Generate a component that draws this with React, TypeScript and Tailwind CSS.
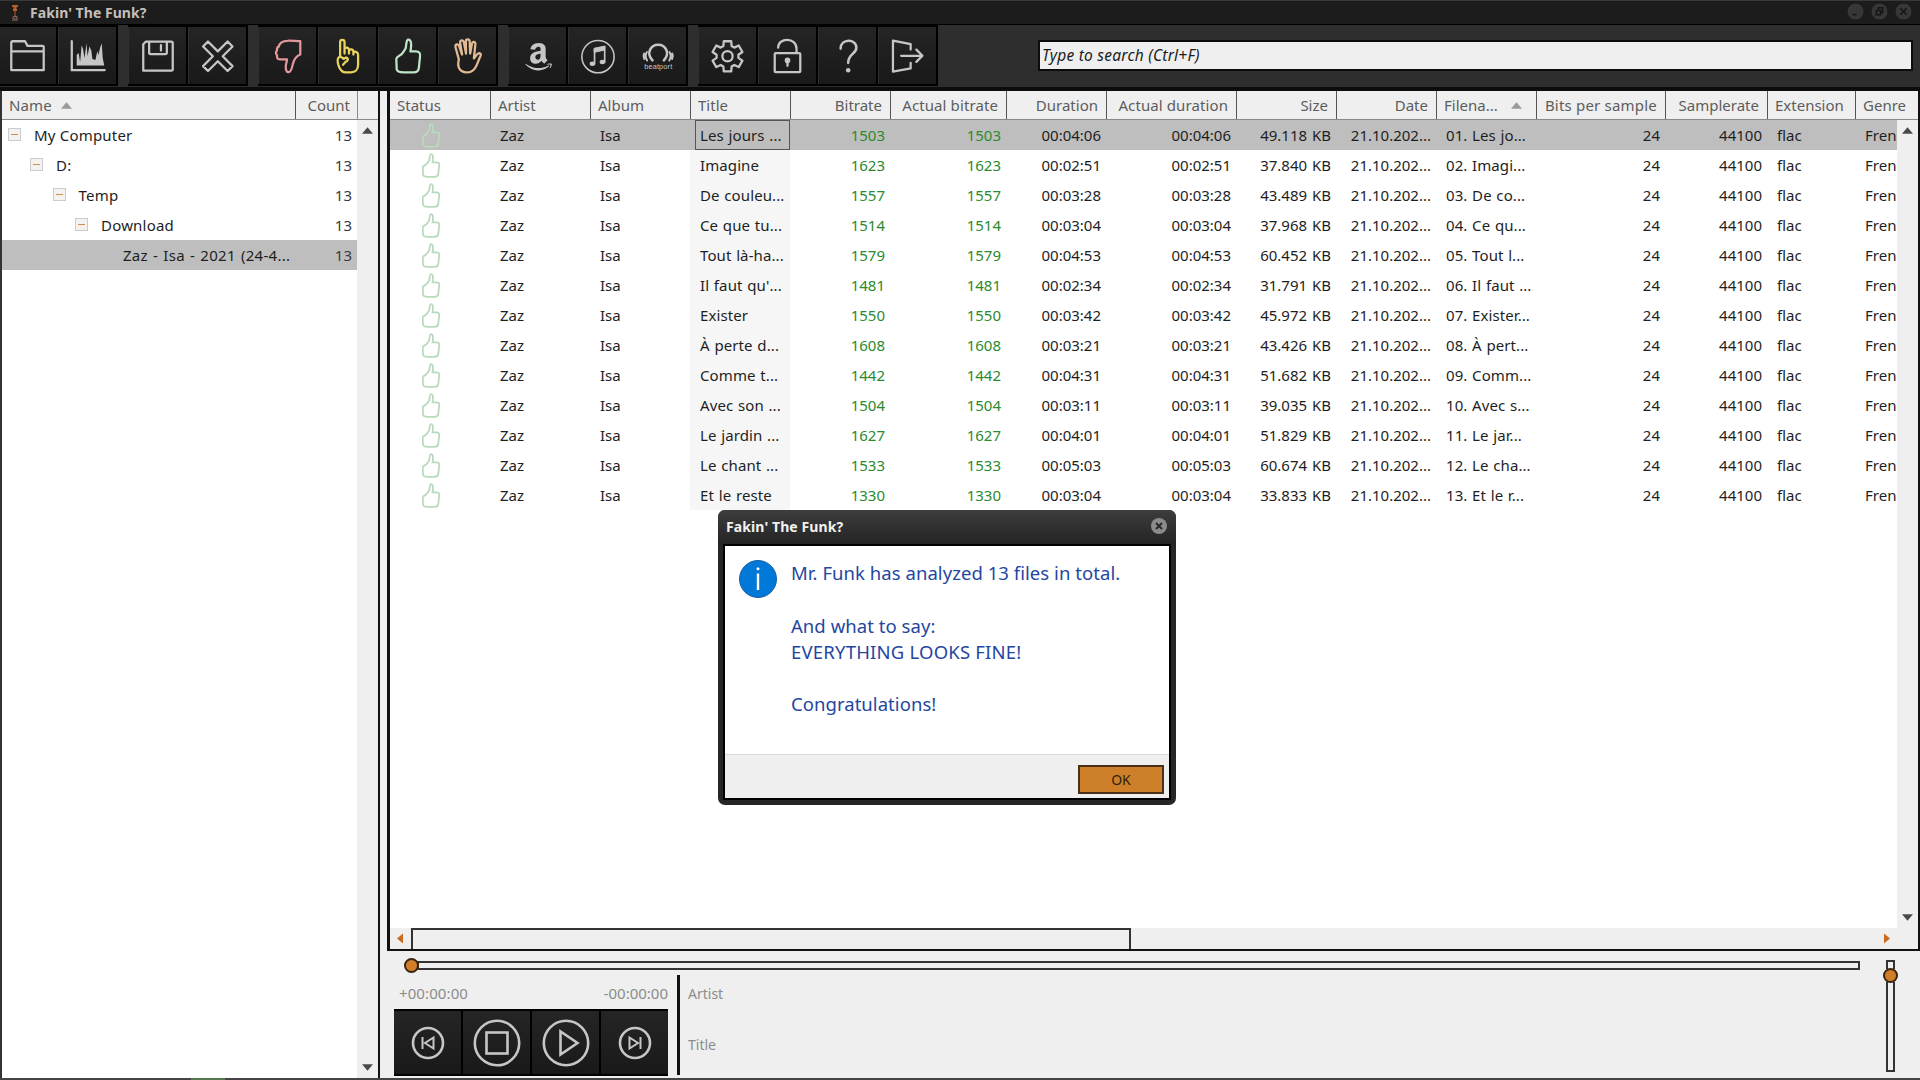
import type { ReactNode } from "react";
import clsx from "clsx";
import { FaAmazon } from "react-icons/fa";

type Column = { label: string; width: string; right?: boolean; sorted?: boolean; spacing?: string };

const columns: Column[] = [
  { label: "Status", width: "w-[101px]" },
  { label: "Artist", width: "w-[100px]" },
  { label: "Album", width: "w-[100px]" },
  { label: "Title", width: "w-[100px]" },
  { label: "Bitrate", width: "w-[100px]", right: true },
  { label: "Actual bitrate", width: "w-[116px]", right: true, spacing: "tracking-[0.1px]" },
  { label: "Duration", width: "w-[100px]", right: true },
  { label: "Actual duration", width: "w-[130px]", right: true, spacing: "tracking-[0.1px]" },
  { label: "Size", width: "w-[100px]", right: true },
  { label: "Date", width: "w-[100px]", right: true },
  { label: "Filena...", width: "w-[100px]", sorted: true },
  { label: "Bits per sample", width: "w-[129px]", right: true, spacing: "tracking-[0.2px]" },
  { label: "Samplerate", width: "w-[102px]", right: true },
  { label: "Extension", width: "w-[88px]" },
  { label: "Genre", width: "w-[62px]" },
];

const tracks = [
  { title: "Les jours ...", bitrate: 1503, duration: "00:04:06", size: "49.118 KB", file: "01. Les jo..." },
  { title: "Imagine", bitrate: 1623, duration: "00:02:51", size: "37.840 KB", file: "02. Imagi..." },
  { title: "De couleu...", bitrate: 1557, duration: "00:03:28", size: "43.489 KB", file: "03. De co..." },
  { title: "Ce que tu...", bitrate: 1514, duration: "00:03:04", size: "37.968 KB", file: "04. Ce qu..." },
  { title: "Tout là-ha...", bitrate: 1579, duration: "00:04:53", size: "60.452 KB", file: "05. Tout l..." },
  { title: "Il faut qu'...", bitrate: 1481, duration: "00:02:34", size: "31.791 KB", file: "06. Il faut ..." },
  { title: "Exister", bitrate: 1550, duration: "00:03:42", size: "45.972 KB", file: "07. Exister..." },
  { title: "À perte d...", bitrate: 1608, duration: "00:03:21", size: "43.426 KB", file: "08. À pert..." },
  { title: "Comme t...", bitrate: 1442, duration: "00:04:31", size: "51.682 KB", file: "09. Comm..." },
  { title: "Avec son ...", bitrate: 1504, duration: "00:03:11", size: "39.035 KB", file: "10. Avec s..." },
  { title: "Le jardin ...", bitrate: 1627, duration: "00:04:01", size: "51.829 KB", file: "11. Le jar..." },
  { title: "Le chant ...", bitrate: 1533, duration: "00:05:03", size: "60.674 KB", file: "12. Le cha..." },
  { title: "Et le reste", bitrate: 1330, duration: "00:03:04", size: "33.833 KB", file: "13. Et le r..." },
];

const folders = [
  { name: "My Computer", indent: "pl-[6px]" },
  { name: "D:", indent: "pl-[28px]" },
  { name: "Temp", indent: "pl-[50.5px]" },
  { name: "Download", indent: "pl-[73px]" },
  { name: "Zaz - Isa - 2021 (24-4...", indent: "pl-[121px]", leaf: true },
];

const THUMB_UP =
  "M27 22.5C28 19 27.5 14 29.5 13.3C32.5 12.8 33.5 17 32 25.3H37.5C41 25.3 42.5 27.5 41.7 31L40.5 42.5C40 45.5 38 46.7 35.3 46.7H25C22 46.7 18.5 46 18 43.5L17.6 33C17.8 30 22.5 30 24 27Z";

function gearPath(cx: number, cy: number) {
  const pts: string[] = [];
  for (let i = 0; i < 6; i++) {
    for (const [offset, r] of [[-22, 11.2], [-14, 15.8], [14, 15.8], [22, 11.2]]) {
      const a = ((i * 60 + offset - 90) * Math.PI) / 180;
      pts.push(`${(cx + r * Math.cos(a)).toFixed(1)} ${(cy + r * Math.sin(a)).toFixed(1)}`);
    }
  }
  return `M${pts.join("L")}Z`;
}

function ToolButton({ color = "text-[#c6c6c6]", first, children }: { color?: string; first?: boolean; children: ReactNode }) {
  return (
    <button
      className={clsx(
        "flex h-[61px] shrink-0 justify-end overflow-hidden border-y-2 border-r-2 border-black bg-linear-to-b from-[#252525] to-[#191919]",
        first ? "w-[58px]" : "w-[60px]",
        color,
      )}
    >
      <svg
        viewBox="0 1 58 57"
        className="h-[57px] w-[58px] shrink-0 border-l border-[#303030]"
        fill="none"
        stroke="currentColor"
        strokeWidth="2.3"
        strokeLinejoin="round"
        strokeLinecap="round"
      >
        {children}
      </svg>
    </button>
  );
}

function Toolbar() {
  return (
    <div className="flex h-[62px] items-start gap-[10px] bg-[#2e2e2e]">
      <div className="flex">
        <ToolButton first>
          <path d="M12.5 44.5V16.5C12.5 15.5 13 15 14 15H26.5L29 19.7H44C45 19.7 45.5 20.2 45.5 21V44.5ZM12.5 25.3H45.5" />
        </ToolButton>
        <ToolButton>
          <path d="M13 15V44.3H46.5" strokeLinejoin="miter" />
          <path
            d="M18 39.7V29L20 27L21.5 36L23 19L24.5 23L26 32L28 17L29 30L31 20L33 25L34 33L37 34L39 25L40 29L42 21L43.5 17L44.5 32L46 39.7Z"
            fill="currentColor"
            stroke="none"
          />
        </ToolButton>
      </div>
      <div className="flex">
        <ToolButton>
          <path d="M14.5 45V18L17 15.5H43C44 15.5 44.5 16 44.5 17V44C44.5 45 44 45 43 45ZM20.5 16V26.5C20.5 27.5 21 28 22 28H37C38 28 38.5 27.5 38.5 26.5V16M32.5 19V24.5" />
        </ToolButton>
        <ToolButton>
          <path
            transform="translate(29.3 30.3)"
            d="M0-5L10-15L15-10L5 0L15 10L10 15L0 5L-10 15L-15 10L-5 0L-15-10L-10-15Z"
          />
        </ToolButton>
      </div>
      <div className="flex">
        <ToolButton color="text-[#e3989b]">
          <path d="M20 20.5C21 16.5 24.5 14.5 29 14.5C33 14.3 38 15 42 15V28.5C38 30 35.5 34 34.5 38C33.7 42 32.5 46.5 30 46.5C27.5 46.5 27 43 27.3 40C27.5 37.5 28.5 35 28.5 33.5H21.5C18.5 33.5 18 31.5 18.5 29.5C16.8 28 17 25.5 18.3 24.5C18 22.5 18.8 21 20 20.5Z" />
        </ToolButton>
        <ToolButton color="text-[#e8d45c]">
          <path d="M21.5 30.5V16C21.5 12.8 26 12.8 26 16V27.5M26 23C26.5 20.5 30.5 21 30.5 24V27.5M30.5 24.5C31.5 22.5 35 23 35 25.8V28.5M35 26.5C37 24.8 39.8 26 39.8 29V39C39.8 43.5 37 46.7 32.5 46.7H27.5C23 46.7 21 43 20 40C19 37 18 33.5 20 31.5C21 30.5 24 31 25 33L27.5 31.5C30.5 32.5 29.5 35 27 36L24.5 39" />
        </ToolButton>
        <ToolButton color="text-[#bfe3c6]">
          <path d={THUMB_UP} />
        </ToolButton>
        <ToolButton color="text-[#e3bb92]">
          <path d="M20.2 33.5L16.8 21C16.2 18 19.5 17 20.5 20L23.5 28.5L21.5 16.5C21.2 13.6 24.7 13 25.3 16L27.5 27.5L27.3 15C27.3 12.3 31 12.3 31.2 15L31.7 27.5L33.5 17.5C34 14.8 37.3 15.3 37 18.2L35.5 32.5C37.5 31.5 38 27 41 27C43.3 27.3 42.8 29.5 41.5 31.5C39 37 37.5 46.7 28.5 46.7C20 46.7 18.5 40 20.2 33.5Z" />
        </ToolButton>
      </div>
      <div className="flex">
        <ToolButton>
          <g transform="translate(14 14.7)" stroke="none">
            <FaAmazon size={32} />
          </g>
        </ToolButton>
        <ToolButton>
          <circle cx="29.5" cy="30.7" r="16.4" strokeWidth="1.6" />
          <path d="M26 38V22.5L36.3 20.3V36" strokeWidth="1.7" />
          <path d="M26 22.5L36.3 20.3V24L26 26.2Z" fill="currentColor" strokeWidth="1" />
          <ellipse cx="23.8" cy="37.8" rx="2.8" ry="2.3" fill="currentColor" stroke="none" />
          <ellipse cx="34" cy="36" rx="2.8" ry="2.3" fill="currentColor" stroke="none" />
        </ToolButton>
        <ToolButton>
          <g transform="translate(-0.6 0)">
            <path d="M24.5 34.5C17.5 27 23 18.5 30.3 18.5C37.6 18.5 43 27 36.1 34.5" strokeWidth="2.6" />
            <path
              d="M19 34.5C17.2 31.5 17.2 28.5 18.8 26M16.2 33C15.2 31 15.2 29 16 27.5M41.6 34.5C43.4 31.5 43.4 28.5 41.8 26M44.4 33C45.4 31 45.4 29 44.6 27.5"
              strokeWidth="2"
            />
            <text
              x="30.3"
              y="43.3"
              textAnchor="middle"
              textLength="28.5"
              className="fill-[#c6c6c6] font-['Liberation_Sans'] text-[7.5px]"
              stroke="none"
            >
              beatport
            </text>
          </g>
        </ToolButton>
      </div>
      <div className="flex">
        <ToolButton>
          <path d={gearPath(29, 30.3)} />
          <circle cx="29" cy="30.3" r="5.2" />
        </ToolButton>
        <ToolButton>
          <rect x="16" y="27" width="26" height="19.5" rx="1" />
          <path d="M19.5 21.5C19.5 10.8 38.2 10.8 38.2 22.5V27" />
          <circle cx="29" cy="34.5" r="1.7" fill="currentColor" />
          <path d="M29 35V40" />
        </ToolButton>
        <ToolButton>
          <path d="M22 22.5C22 12 38 12 38 21.5C38 28 29.7 27.5 29.7 37" strokeWidth="2.6" />
          <circle cx="29.7" cy="44.6" r="2.3" fill="currentColor" stroke="none" />
        </ToolButton>
        <ToolButton>
          <path d="M32.2 23.5V18L14.2 14.3V46L32.2 42.7V37M22.5 29.8H44M38 23.5L44.2 29.8L38 36" />
        </ToolButton>
      </div>
      <div className="mt-[15px] mr-[7px] ml-[90px] h-[31px] grow border-2 border-[#0c0c0c] bg-[#efefef] pl-[2px] text-[15.5px] leading-[27px] tracking-[0.25px] text-[#1c1c1c] italic">
        Type to search (Ctrl+F)
      </div>
    </div>
  );
}

function TitleBar() {
  return (
    <header className="flex h-[25px] items-center border-t border-b border-t-[#3a3a3a] border-b-black bg-[#1c1c1c]">
      <svg viewBox="0 0 8 18" className="ml-[11px] h-[18px] w-2">
        <path d="M1 1H7V3H5.5V5H6V7H2V5H2.5V3H1Z" fill="#b5622a" />
        <path d="M3 7H5V12H3Z" fill="#6b3a22" />
        <path d="M2 17V13.5C2 12 6 12 6 13.5V17M4 14V17" fill="none" stroke="#8a6a5e" strokeWidth="1.2" />
      </svg>
      <span className="ml-[11px] text-[14px] font-bold tracking-[0.05px] text-[#c4bfb8]">Fakin' The Funk?</span>
      <div className="mr-[8px] ml-auto flex gap-[7px]">
        {["M5 11H9", "M5 7H9V11H5ZM7 7V4.5H11V9H9", "M5 5L11 11M11 5L5 11"].map((d) => (
          <svg key={d} viewBox="0 0 16 16" className="-mt-[2px] size-[17px]">
            <circle cx="8" cy="8" r="7.5" fill="#373737" />
            <path d={d} fill="none" stroke="#141414" strokeWidth="1.4" />
          </svg>
        ))}
      </div>
    </header>
  );
}

function Arrow({ dir, className }: { dir: "up" | "down" | "left" | "right"; className: string }) {
  const d = { up: "M0 6L5 0L10 6Z", down: "M0 0H10L5 6Z", left: "M6 0V10L0 5Z", right: "M0 0L6 5L0 10Z" }[dir];
  const vertical = dir === "up" || dir === "down";
  return (
    <svg viewBox={vertical ? "0 0 10 6" : "0 0 6 10"} className={clsx("shrink-0", vertical ? "h-[7px] w-[11px]" : "h-[11px] w-[6px]", className)}>
      <path d={d} fill="currentColor" />
    </svg>
  );
}

function VerticalScroll() {
  return (
    <div className="flex w-[21px] shrink-0 flex-col items-center justify-between bg-[#efefef] pt-[7px] pb-[7px]">
      <Arrow dir="up" className="text-[#4a4a4a]" />
      <Arrow dir="down" className="text-[#4a4a4a]" />
    </div>
  );
}

function FolderTree() {
  return (
    <aside className="flex w-[381px] flex-col border-r-2 border-l-2 border-r-[#111] border-l-[#333]">
      <div className="flex h-[29px] border-b border-[#8a8a8a] bg-[#efefef] text-[#5d5d5d]">
        <div className="flex w-[294px] items-center border-r border-[#555] pl-[7px] tracking-[0.1px]">
          Name <Arrow dir="up" className="ml-[9px] text-[#9a9a9a]" />
        </div>
        <div className="flex w-[62px] items-center justify-end border-r border-[#8a8a8a] pr-[7px]">Count</div>
      </div>
      <div className="flex grow bg-white">
        <div className="grow">
          {folders.map(({ name, indent, leaf }) => (
            <div key={name} className={clsx("flex h-[30px] items-center pr-[5px] text-[#1e1e1e]", indent, leaf && "bg-[#bebebe]")}>
              {!leaf && (
                <span className="mr-[13px] -mt-[2px] grid size-[13px] place-items-center border border-[#c9cdd3] bg-[#f4f1ee]">
                  <span className="h-px w-[7px] bg-[#c98f55]" />
                </span>
              )}
              <span className={leaf ? "tracking-[0.28px] [word-spacing:1px]" : "tracking-[0.2px]"}>{name}</span>
              <span className="ml-auto text-[#3a3a42]">13</span>
            </div>
          ))}
        </div>
        <VerticalScroll />
      </div>
    </aside>
  );
}

function TrackTable() {
  return (
    <section className="flex h-[860px] shrink-0 flex-col border-r-2 border-b-2 border-l-[3px] border-[#111] bg-white">
      <div className="flex h-[29px] shrink-0 border-b border-[#8a8a8a] bg-[#efefef] text-[#5d5d5d]">
        {columns.map(({ label, width, right, sorted, spacing }, i) => (
          <div
            key={label}
            className={clsx(
              "flex shrink-0 items-center pl-[7px] whitespace-nowrap",
              width,
              spacing,
              right && "justify-end pr-[8px]",
              i < columns.length - 1 && "border-r border-[#555]",
            )}
          >
            {label}
            {sorted && <Arrow dir="up" className="mr-[14px] ml-auto text-[#9a9a9a]" />}
          </div>
        ))}
      </div>
      <div className="flex grow">
        <div className="w-[1507px] overflow-hidden">
          {tracks.map((t, i) => (
            <div
              key={t.file}
              className={clsx("flex h-[30px] items-center whitespace-nowrap text-[#1e1e1e]", i === 0 && "bg-[#bebebe]")}
            >
              <div className="w-[101px] shrink-0 pl-[32px]">
                <svg viewBox="16.5 12 26.5 36" className="h-[25px] w-[18px] text-[#b9dabd]">
                  <path d={THUMB_UP} fill="none" stroke="currentColor" strokeWidth="2.6" />
                </svg>
              </div>
              <div className="w-[100px] shrink-0 pl-[9px]">Zaz</div>
              <div className="w-[99px] shrink-0 pl-[9px]">Isa</div>
              <div className={clsx("h-full w-[100px] shrink-0", i > 0 && "bg-[#f6f6f6]")}>
                <div
                  className={clsx(
                    "ml-[5px] h-full border pl-[4px] leading-[29px] tracking-[0.1px] [word-spacing:0.7px]",
                    i === 0 ? "border-[#555]" : "border-transparent",
                  )}
                >
                  {t.title}
                </div>
              </div>
              <div className="w-[101px] shrink-0 pr-[6px] text-right text-[#2b8a2f]">{t.bitrate}</div>
              <div className="w-[116px] shrink-0 pr-[6px] text-right text-[#2b8a2f]">{t.bitrate}</div>
              <div className="w-[100px] shrink-0 pr-[6px] text-right">{t.duration}</div>
              <div className="w-[130px] shrink-0 pr-[6px] text-right">{t.duration}</div>
              <div className="w-[100px] shrink-0 pr-[6px] text-right [word-spacing:1px]">{t.size}</div>
              <div className="w-[100px] shrink-0 pr-[6px] text-right">21.10.202...</div>
              <div className="w-[100px] shrink-0 pl-[9px] tracking-[0.08px] [word-spacing:0.7px]">{t.file}</div>
              <div className="w-[129px] shrink-0 pr-[6px] text-right">24</div>
              <div className="w-[102px] shrink-0 pr-[6px] text-right">44100</div>
              <div className="w-[88px] shrink-0 pl-[9px]">flac</div>
              <div className="shrink-0 pl-[9px]">Fren</div>
            </div>
          ))}
        </div>
        <VerticalScroll />
      </div>
      <div className="flex h-[21px] shrink-0 items-center bg-[#efefef]">
        <Arrow dir="left" className="mr-[8px] ml-[7px] text-[#c96a1e]" />
        <div className="h-full w-[720px] border-2 border-b-0 border-[#333]" />
        <Arrow dir="right" className="mr-[28px] ml-auto text-[#c96a1e]" />
      </div>
    </section>
  );
}

function PlayerButton({ children, small }: { children: ReactNode; small?: boolean }) {
  return (
    <button className="grid h-full grow place-items-center bg-linear-to-b from-[#252525] to-[#191919] text-[#c6c6c6]">
      <svg viewBox="0 0 48 48" className="size-12" fill="none" stroke="currentColor" strokeWidth="2.6">
        <circle cx="24" cy="24" r={small ? 15 : 22.2} />
        {children}
      </svg>
    </button>
  );
}

function Player() {
  return (
    <div className="flex grow flex-row">
      <div className="flex w-[1473px] flex-col">
        <div className="mt-[7px] ml-[17px] flex items-center">
          <span className="z-10 size-[15px] rounded-full border-2 border-[#3a2410] bg-[#d07f28]" />
          <span className="-ml-[2px] h-[9px] grow border-2 border-[#333] bg-[#efefef]" />
        </div>
        <div className="flex">
          <div className="ml-[7px] flex w-[274px] flex-col">
            <div className="flex h-[36px] items-center justify-between pt-[4px] pl-[5px] text-[#8c8c8c]">
              <span className="tracking-[0.1px]">+00:00:00</span>
              <span>-00:00:00</span>
            </div>
            <div className="flex h-[67px] gap-[2px] border-y-2 border-black bg-black">
              <PlayerButton small>
                <path d="M18.5 18V30M29.5 18.5V29.5L21 24Z" strokeWidth="2" />
              </PlayerButton>
              <PlayerButton>
                <rect x="13.5" y="13.5" width="21" height="21" />
              </PlayerButton>
              <PlayerButton>
                <path d="M18.5 12.5V35.5L35.5 24Z" />
              </PlayerButton>
              <PlayerButton small>
                <path d="M29.5 18V30M18.5 18.5V29.5L27 24Z" strokeWidth="2" />
              </PlayerButton>
            </div>
          </div>
          <div className="mt-[2px] ml-[9px] h-[100px] w-[3px] bg-[#111]" />
          <div className="ml-[8px] flex flex-col text-[14px] text-[#8c8c8c]">
            <span className="mt-[10px] leading-[22px]">Artist</span>
            <span className="mt-[29px] leading-[22px]">Title</span>
          </div>
        </div>
      </div>
      <div className="mt-[9px] ml-[23px] flex flex-col items-center">
        <span className="h-[9px] w-[9px] border-2 border-b-0 border-[#333] bg-[#efefef]" />
        <span className="z-10 -mt-px size-[15px] rounded-full border-2 border-[#3a2410] bg-[#d07f28]" />
        <span className="-mt-px h-[90px] w-[9px] border-2 border-t-0 border-[#333] bg-[#efefef]" />
      </div>
    </div>
  );
}

function ResultDialog() {
  return (
    <div className="absolute top-[510px] left-[718px] flex h-[295px] w-[458px] flex-col rounded-[7px] bg-[#262626] px-[5px] pb-[5px]">
      <div className="-mx-[5px] flex h-[34px] items-center justify-between rounded-t-[7px] bg-linear-to-b from-[#3d3d3d] to-[#242424] pr-[9px] pl-[8px]">
        <span className="text-[14px] font-bold tracking-[0.1px] text-[#f1f1f1]">Fakin' The Funk?</span>
        <svg viewBox="0 0 16 16" className="mb-[2px] size-4">
          <circle cx="8" cy="8" r="8" fill="#8b8b8b" />
          <path d="M5 5L11 11M11 5L5 11" stroke="#2a2a2a" strokeWidth="2" />
        </svg>
      </div>
      <div className="flex grow flex-col border-2 border-black bg-white">
        <div className="flex grow gap-[14px] pt-[14px] pl-[14px]">
          <svg viewBox="0 0 38 38" className="size-[38px]">
            <circle cx="19" cy="19" r="18.5" fill="#0078d7" stroke="#1a5fa8" />
            <circle cx="19" cy="8.8" r="1.5" fill="#fff" />
            <path d="M19 13.5V30" stroke="#fff" strokeWidth="2.4" />
          </svg>
          <p className="text-[18.5px] leading-[26.3px] tracking-[0.05px] whitespace-pre-line text-[#2446a0]">
            {"Mr. Funk has analyzed 13 files in total.\n\nAnd what to say:\n"}
            <span className="tracking-[0.2px]">EVERYTHING LOOKS FINE!</span>
            {"\n\nCongratulations!"}
          </p>
        </div>
        <div className="flex h-[44px] shrink-0 items-start justify-end border-t border-[#dcdcdc] bg-[#efefef] pt-[10px] pr-[5px]">
          <button className="h-[29px] w-[86px] border-2 border-[#4a3018] bg-[#cd8029] text-[14px] leading-[25px] text-[#33200c]">OK</button>
        </div>
      </div>
    </div>
  );
}

export default function App() {
  return (
    <div className="relative flex h-[1080px] w-[1920px] flex-col overflow-hidden bg-[#efefef] font-['Noto_Sans',sans-serif] text-[15px] leading-[20px]">
      <TitleBar />
      <Toolbar />
      <div className="h-[4px] shrink-0 bg-[#0d0d0d]" />
      <main className="flex h-[987px]">
        <FolderTree />
        <div className="ml-[7px] flex grow flex-col">
          <TrackTable />
          <Player />
        </div>
      </main>
      <div className="h-[2px] shrink-0 bg-[#444]">
        <div className="ml-[191px] h-full w-[34px] bg-[#557a50]" />
      </div>
      <ResultDialog />
    </div>
  );
}
